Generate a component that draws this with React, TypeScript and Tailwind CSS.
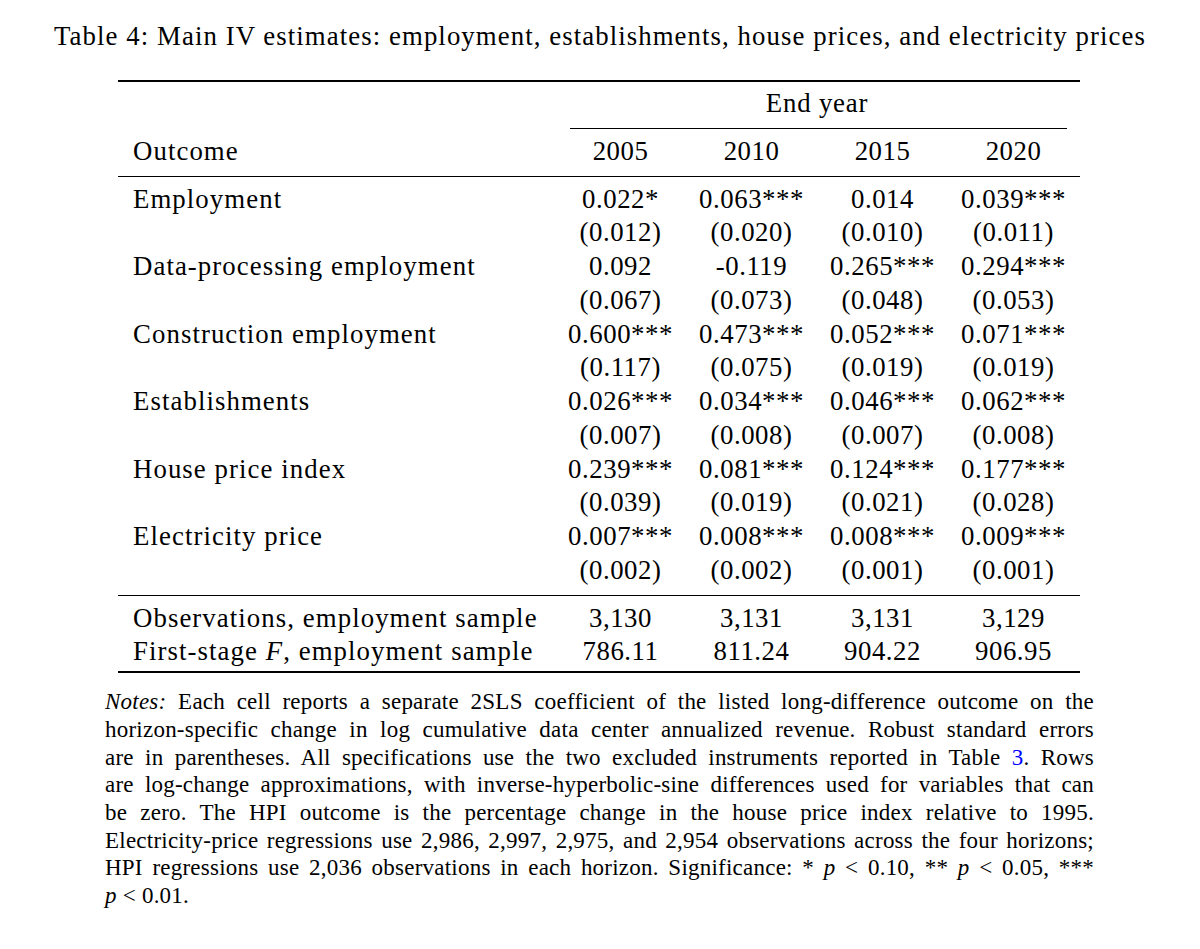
import { Fragment } from "react";

const rows = [
  { label: "Employment", coef: ["0.022*", "0.063***", "0.014", "0.039***"], se: ["(0.012)", "(0.020)", "(0.010)", "(0.011)"] },
  { label: "Data-processing employment", coef: ["0.092", "-0.119", "0.265***", "0.294***"], se: ["(0.067)", "(0.073)", "(0.048)", "(0.053)"] },
  { label: "Construction employment", coef: ["0.600***", "0.473***", "0.052***", "0.071***"], se: ["(0.117)", "(0.075)", "(0.019)", "(0.019)"] },
  { label: "Establishments", coef: ["0.026***", "0.034***", "0.046***", "0.062***"], se: ["(0.007)", "(0.008)", "(0.007)", "(0.008)"] },
  { label: "House price index", coef: ["0.239***", "0.081***", "0.124***", "0.177***"], se: ["(0.039)", "(0.019)", "(0.021)", "(0.028)"] },
  { label: "Electricity price", coef: ["0.007***", "0.008***", "0.008***", "0.009***"], se: ["(0.002)", "(0.002)", "(0.001)", "(0.001)"] },
];

const years = ["2005", "2010", "2015", "2020"];
const obs = ["3,130", "3,131", "3,131", "3,129"];
const firstStage = ["786.11", "811.24", "904.22", "906.95"];

// one row of the table: label + four centred cells
function Line({ label, cells }: { label?: React.ReactNode; cells: string[] }) {
  return (
    <>
      <div className="pl-[15px] tracking-[0.04em] whitespace-nowrap">{label}</div>
      {cells.map((c, i) => (
        <div key={i} className="text-center tracking-[0.02em] whitespace-nowrap">
          {c}
        </div>
      ))}
    </>
  );
}

const justify = "text-justify [text-align-last:justify]";

export default function App() {
  return (
    <div className="min-h-screen bg-white text-black font-['Liberation_Serif',serif]">
      {/* caption */}
      <div className="pt-[20px] text-center text-[26.8px] leading-[32px] tracking-[0.04em] whitespace-nowrap">
        Table 4: Main IV estimates: employment, establishments, house prices, and electricity prices
      </div>

      {/* table */}
      <div className="ml-[118px] mt-[28px] w-[962px] text-[26.8px]">
        <div className="h-[2px] bg-black" />
        <div className="grid grid-cols-[437px_524px] pt-[5px] pb-[7px] leading-[33.6px]">
          <div />
          <div className="text-center tracking-[0.03em]">End year</div>
        </div>
        <div className="grid grid-cols-[437px_524px]">
          <div />
          <div className="ml-[15px] mr-[12px] h-px bg-black" />
        </div>
        <div className="grid grid-cols-[437px_131px_131px_131px_131px] pt-[6px] pb-[7.5px] leading-[33.6px]">
          <Line label="Outcome" cells={years} />
        </div>
        <div className="h-px bg-black" />
        <div className="grid grid-cols-[437px_131px_131px_131px_131px] pt-[6px] pb-[7px] leading-[33.75px]">
          {rows.map((r) => (
            <Fragment key={r.label}>
              <Line label={r.label} cells={r.coef} />
              <Line cells={r.se} />
            </Fragment>
          ))}
        </div>
        <div className="h-px bg-black" />
        <div className="grid grid-cols-[437px_131px_131px_131px_131px] pt-[6px] pb-[2.5px] leading-[33.5px]">
          <Line label="Observations, employment sample" cells={obs} />
          <Line
            label={
              <>
                First-stage <i>F</i>, employment sample
              </>
            }
            cells={firstStage}
          />
        </div>
        <div className="h-[2px] bg-black" />
      </div>

      {/* notes */}
      <div className="ml-[105px] mt-[15px] w-[989px] text-[23px] leading-[27.7px] tracking-[0.01em]">
        <div className={justify}>
          <i>Notes:</i> Each cell reports a separate 2SLS coefficient of the listed long-difference outcome on the
        </div>
        <div className={justify}>
          horizon-specific change in log cumulative data center annualized revenue. Robust standard errors
        </div>
        <div className={justify}>
          are in parentheses. All specifications use the two excluded instruments reported in Table{" "}
          <span className="text-[#0000ff]">3</span>. Rows
        </div>
        <div className={justify}>
          are log-change approximations, with inverse-hyperbolic-sine differences used for variables that can
        </div>
        <div className={justify}>
          be zero. The HPI outcome is the percentage change in the house price index relative to 1995.
        </div>
        <div className={justify}>
          Electricity-price regressions use 2,986, 2,997, 2,975, and 2,954 observations across the four horizons;
        </div>
        <div className={justify}>
          HPI regressions use 2,036 observations in each horizon. Significance: * <i>p</i> &lt; 0.10, ** <i>p</i> &lt;
          0.05, ***
        </div>
        <div>
          <i>p</i> &lt; 0.01.
        </div>
      </div>
    </div>
  );
}
